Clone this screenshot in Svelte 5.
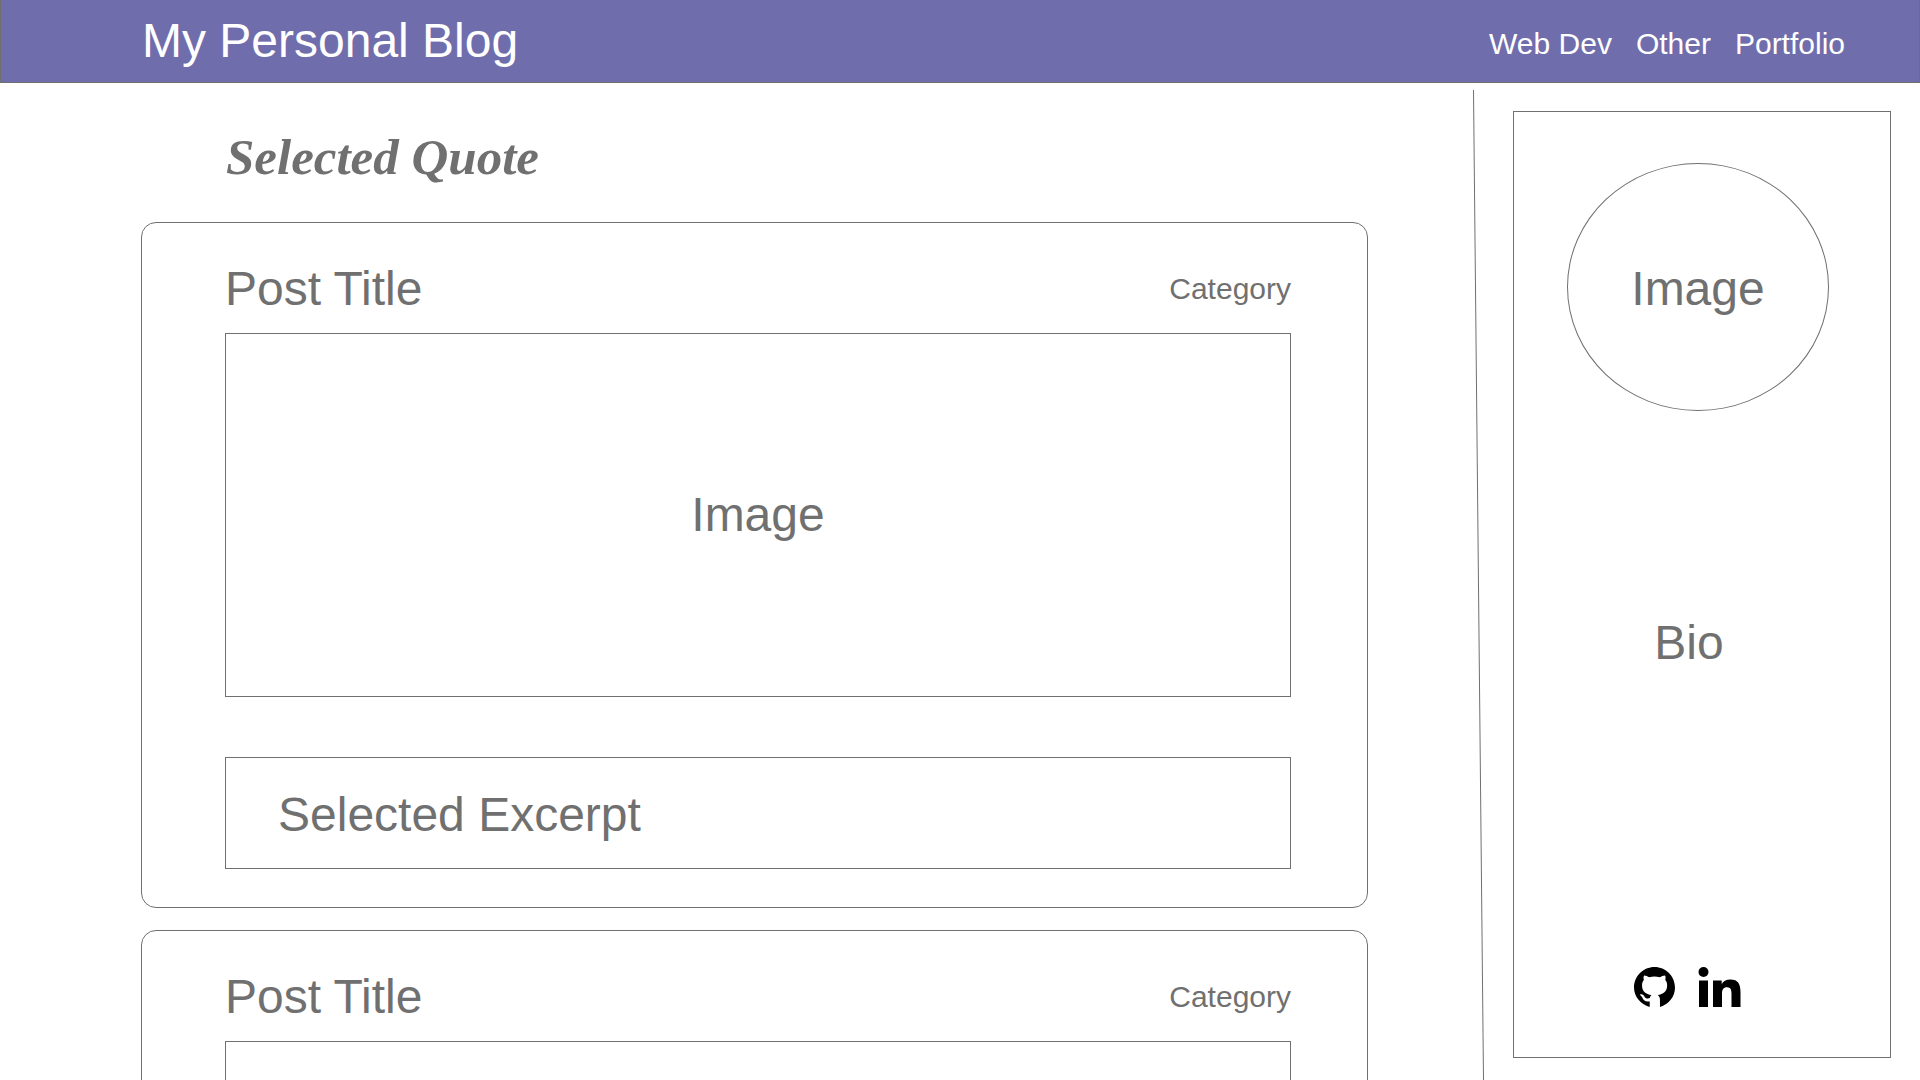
<script>
  const links = [
    { label: 'Web Dev', href: '#web-dev' },
    { label: 'Other', href: '#other' },
    { label: 'Portfolio', href: '#portfolio' }
  ];

  const posts = [
    { id: 1, title: 'Post Title', category: 'Category', image: 'Image', excerpt: 'Selected Excerpt' },
    { id: 2, title: 'Post Title', category: 'Category', image: '', excerpt: '' }
  ];
</script>

<div class="page">
  <header class="topbar">
    <h1>My Personal Blog</h1>
    <nav aria-label="Main">
      {#each links as link}
        <a href={link.href}>{link.label}</a>
      {/each}
    </nav>
  </header>

  <div class="content">
    <main>
      <p class="quote">Selected Quote</p>
      {#each posts as post (post.id)}
        <article>
          <div class="post-head">
            <h2>{post.title}</h2>
            <a class="category" href="#category">{post.category}</a>
          </div>
          <div class="post-image">{post.image}</div>
          {#if post.excerpt}
            <p class="excerpt">{post.excerpt}</p>
          {/if}
        </article>
      {/each}
    </main>

    <svg class="divider" viewBox="0 0 11 990" preserveAspectRatio="none" aria-hidden="true">
      <line x1="0.5" y1="0" x2="10.5" y2="990" vector-effect="non-scaling-stroke" />
    </svg>

    <aside>
      <div class="avatar">Image</div>
      <p class="bio">Bio</p>
      <div class="social">
        <a href="#github" aria-label="GitHub">
          <svg width="41" height="40" viewBox="0 0 24 23.4">
            <path d="M12 0C5.4 0 0 5.4 0 12C0 17.2 3.8 21.9 9.2 23.4V20.2C6.5 20.4 5.7 19.5 5 18.2C4.6 17.3 4.1 16.7 3.4 16.2C4.8 15.5 5.7 16.5 6.3 17.5C7 18.6 8.2 18.5 9.3 18.2C9.4 17.4 9.7 16.9 10.2 16.4C7 16 4.7 14.5 4.7 10.7C4.7 9.4 5.1 8.4 5.8 7.6C5.5 6.7 5.5 5.7 5.9 4.9C7 4.9 8 5.4 8.9 6C11 5.5 13 5.5 15.1 6C16 5.4 17.1 4.9 18.2 4.9C18.6 5.7 18.5 6.7 18.3 7.6C19 8.4 19.4 9.4 19.4 10.7C19.4 14.5 17 16 13.9 16.4C14.8 17.1 15.2 18 15.2 19.2V23.4C20.5 21.9 24 17.2 24 12C24 5.4 18.6 0 12 0Z" />
          </svg>
        </a>
        <a href="#linkedin" aria-label="LinkedIn">
          <svg width="43" height="40" viewBox="0 0 43 40">
            <circle cx="5.5" cy="5" r="5" />
            <path d="M1 13.5h9V40H1z" />
            <path d="M15 13.5h8.7v3.7c1.3-2.5 4.3-4.6 8.6-4.6 8 0 10.2 4.8 10.2 12.4V40h-9V26.700c0-3.600-.8-6.400-4.400-6.400-3.900 0-5.100 2.700-5.100 6.400V40h-9z" />
          </svg>
        </a>
      </div>
    </aside>
  </div>
</div>

<style>
  :global(body) {
    background: #fff;
  }

  .page,
  .page * {
    box-sizing: border-box;
  }

  .page {
    display: flex;
    flex-direction: column;
    height: 100vh;
    overflow: hidden;
    color: #707070;
    font-family: "Liberation Sans", Arial, Helvetica, sans-serif;
    font-size: 48px;
    line-height: 56px;
  }

  h1,
  h2,
  p {
    margin: 0;
    font-size: 48px;
    font-weight: 400;
  }

  a {
    color: inherit;
    text-decoration: none;
  }

  .topbar {
    display: flex;
    align-items: center;
    justify-content: space-between;
    flex: none;
    padding: 13px 74px 13px 141px;
    border: 1px solid #707070;
    border-top: 0;
    background: #706dac;
    color: #fff;
  }

  nav {
    display: flex;
    gap: 24px;
    padding-top: 6px;
    font-size: 30px;
    line-height: 36px;
  }

  .content {
    display: flex;
    flex: 1;
    min-height: 0;
    padding: 0 29px 0 141px;
  }

  main {
    display: flex;
    flex: 1;
    flex-direction: column;
    gap: 22px;
    overflow-y: auto;
    scrollbar-width: none;
  }

  .quote {
    padding: 46px 0 15px 85px;
    font-family: "Liberation Serif", "Times New Roman", serif;
    font-size: 51px;
    font-style: italic;
    font-weight: 700;
  }

  article {
    flex: none;
    padding: 38px 76px 38px 83px;
    border: 1px solid #707070;
    border-radius: 15px;
  }

  .post-head {
    display: flex;
    align-items: center;
    justify-content: space-between;
    margin-bottom: 16px;
  }

  .category {
    font-size: 30px;
    line-height: 36px;
  }

  .post-image {
    display: grid;
    place-items: center;
    height: 364px;
    border: 1px solid #707070;
  }

  .excerpt {
    margin-top: 60px;
    padding: 29px 52px 25px;
    border: 1px solid #707070;
  }

  .divider {
    flex: none;
    width: 11px;
    height: calc(100% - 7px);
    margin: 7px 29px 0 105px;
    stroke: #707070;
    stroke-width: 1px;
  }

  aside {
    display: flex;
    flex: none;
    flex-direction: column;
    align-items: center;
    width: 378px;
    margin: 28px 0 22px;
    padding: 51px 8px 50px 0;
    border: 1px solid #707070;
  }

  .avatar {
    display: grid;
    place-items: center;
    width: 262px;
    height: 248px;
    padding-top: 3px;
    border: 1px solid #707070;
    border-radius: 50%;
  }

  .bio {
    margin: 204px 18px 0 0;
  }

  .social {
    display: flex;
    gap: 23px;
    margin: auto 22px 0 0;
    fill: #000;
  }

  .social a,
  .social svg {
    display: block;
  }
</style>
